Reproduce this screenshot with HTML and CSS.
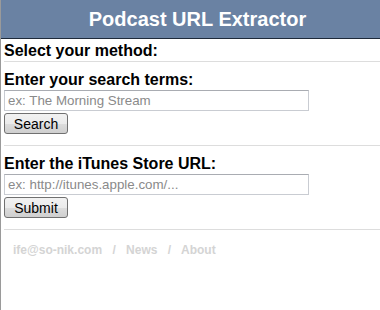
FILE: index.html
```html
<!DOCTYPE html>
<html lang="en">
  <head>
    <meta charset="UTF-8" />
    <meta name="viewport" content="width=device-width, initial-scale=1.0" />
    <title>Podcast URL Extractor</title>
    <link rel="stylesheet" href="styles.css">
  </head>
  <body>
    <div class="page">
      <h1 class="title">Podcast URL Extractor</h1>
      <div class="content">
        <h2 class="method">Select your method:</h2>

        <form class="section" id="searchForm">
          <label for="terms">Enter your search terms:</label>
          <input type="text" id="terms" name="terms" placeholder="ex: The Morning Stream" />
          <button type="submit">Search</button>
        </form>

        <form class="section" id="urlForm">
          <label for="url">Enter the iTunes Store URL:</label>
          <input type="text" id="url" name="url" placeholder="ex: http://itunes.apple.com/..." />
          <button type="submit">Submit</button>
        </form>

        <div class="footer">
          <a href="#">ife@so-nik.com</a>
          <span class="sep">/</span>
          <a href="#">News</a>
          <span class="sep">/</span>
          <a href="#">About</a>
        </div>
      </div>
    </div>
  </body>
</html>
```

FILE: styles.css
```css
body {
  margin: 0;
  font-family: "Liberation Sans", Arial, sans-serif;
  background-color: #ffffff;
}
.page {
  min-height: 310px;
  border-left: 1px solid #9a9a9a;
}
.title {
  margin: 0;
  height: 38px;
  line-height: 38px;
  padding-left: 14px;
  background-color: #6a82a3;
  border-bottom: 1px solid #1e2a3a;
  color: #ffffff;
  font-size: 20px;
  font-weight: bold;
  text-align: center;
}
.content {
  padding-left: 3px;
}
.method {
  margin: 0;
  padding: 3px 0 1px 0;
  font-size: 16px;
  font-weight: bold;
  color: #000000;
  border-bottom: 1px solid #dddddd;
}
.section {
  display: flex;
  flex-direction: column;
  align-items: flex-start;
  padding: 9px 0 11px 0;
  border-bottom: 1px solid #dddddd;
}
label {
  font-size: 16px;
  font-weight: bold;
  color: #000000;
  line-height: 18px;
}
input {
  box-sizing: border-box;
  width: 305px;
  height: 21px;
  margin: 1px 0 2px 0;
  padding: 1px 3px;
  border: 1px solid #c9ccd2;
  border-top-color: #a9acb2;
  font-family: "Liberation Sans", Arial, sans-serif;
  font-size: 13.33px;
}
input::placeholder {
  color: #8a8a8a;
}
button {
  box-sizing: border-box;
  width: 64px;
  height: 21px;
  padding: 0;
  border: 1px solid #707070;
  border-radius: 3px;
  background: linear-gradient(#f2f2f2 0%, #ebebeb 50%, #dddddd 51%, #cfcfcf 100%);
  color: #000000;
  font-family: "Liberation Sans", Arial, sans-serif;
  font-size: 14px;
  cursor: pointer;
}
.footer {
  padding: 13px 0 0 9px;
  font-size: 12px;
  font-weight: bold;
  color: #d4d4d4;
}
.footer a {
  color: #d4d4d4;
  text-decoration: none;
}
.sep {
  margin: 0 7px;
}
```
